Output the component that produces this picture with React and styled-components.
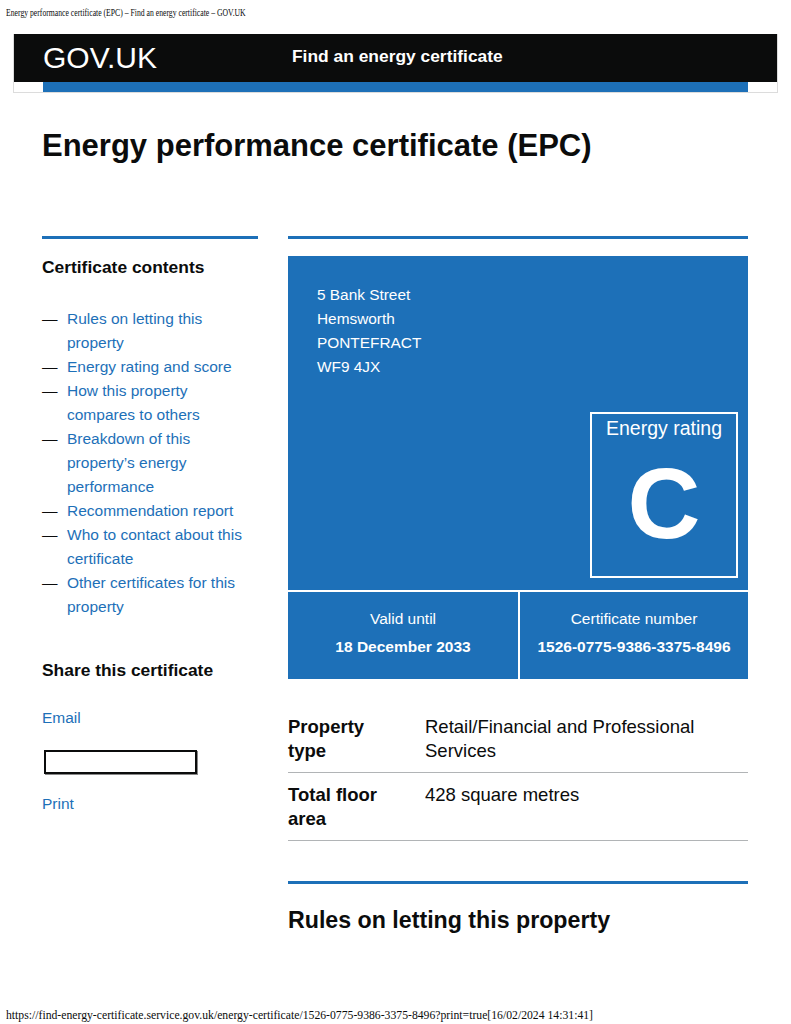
import styled, { createGlobalStyle } from 'styled-components';

const GlobalStyle = createGlobalStyle`
  body {
    margin: 0;
    background: #fff;
    color: #0b0c0c;
    font-family: "Liberation Sans", Arial, sans-serif;
  }
`;

const blue = '#1d70b8';

// browser print header / footer lines
const PrintLine = styled.div`
  height: ${(p) => p.$h}px;
  padding-top: ${(p) => p.$pt}px;
  margin-left: 6px;
  box-sizing: border-box;
  font-family: "Liberation Serif", "Times New Roman", serif;
  font-size: ${(p) => p.$fs}px;
  line-height: 12px;
  white-space: nowrap;
  transform: scaleX(${(p) => p.$sx});
  transform-origin: left top;
`;

const Header = styled.header`
  margin: 0 13px;
  border: 1px solid #dcdcdc;
  border-top: 0;
`;

const HeaderBar = styled.div`
  height: 48px;
  background: #0b0c0c;
  display: flex;
  align-items: center;
  padding-left: 29px;
  color: #fff;
`;

const Logo = styled.div`
  width: 249px;
  font-size: 30px;
  line-height: 1;
`;

const ServiceName = styled.div`
  font-size: 17.4px;
  font-weight: 700;
  margin-top: -4px;
`;

const HeaderStrip = styled.div`
  padding: 0 29px;
  div {
    height: 10px;
    background: ${blue};
  }
`;

const Main = styled.main`
  width: 706px;
  margin-left: 42px;
`;

const Title = styled.h1`
  margin: 35px 0 0;
  font-size: 31px;
  line-height: 36px;
  font-weight: 700;
`;

const Columns = styled.div`
  display: grid;
  grid-template-columns: 216px 460px;
  column-gap: 30px;
  margin-top: 72px;
`;

const Section = styled.div`
  border-top: 3px solid ${blue};
`;

const SideHeading = styled.h2`
  margin: ${(p) => p.$mt}px 0 0;
  font-size: 17.4px;
  line-height: 24px;
  font-weight: 700;
`;

const Contents = styled.ul`
  list-style: none;
  margin: 28px 0 0;
  padding: 0;
`;

const ContentItem = styled.li`
  display: flex;
  font-size: 15.5px;
  line-height: 24.2px;
  &::before {
    content: '—';
    width: 25px;
    flex: none;
    color: #0b0c0c;
  }
`;

const Link = styled.a`
  color: ${blue};
  text-decoration: none;
  font-size: 15.5px;
  line-height: 24px;
  display: ${(p) => (p.$block ? 'block' : 'inline')};
  margin-top: ${(p) => p.$mt || 0}px;
`;

const CopyBox = styled.div`
  margin: 20px 0 0 2px;
  width: 149px;
  height: 20px;
  border: 2px solid #0b0c0c;
  box-shadow: 1px 1px 0 #888;
`;

const CertBox = styled.div`
  margin-top: 17px;
  display: grid;
  grid-template-columns: 230px 228px;
  gap: 2px;
  background: #fff;
`;

const CertTop = styled.div`
  grid-column: 1 / span 2;
  height: 334px;
  box-sizing: border-box;
  background: ${blue};
  color: #fff;
  padding: 27px 10px 12px 29px;
  display: flex;
  flex-direction: column;
`;

const Address = styled.p`
  margin: 0;
  font-size: 15.4px;
  line-height: 24px;
`;

const RatingBox = styled.div`
  margin-top: auto;
  align-self: flex-end;
  width: 148px;
  height: 166px;
  box-sizing: border-box;
  border: 2px solid #fff;
  display: flex;
  flex-direction: column;
  align-items: center;
`;

const RatingLabel = styled.div`
  font-size: 19.5px;
  line-height: 24px;
  margin-top: 2px;
`;

const RatingLetter = styled.div`
  font-size: 101px;
  font-weight: 700;
  line-height: 1;
  margin-top: 13px;
`;

const CertCell = styled.div`
  height: 87px;
  background: ${blue};
  color: #fff;
  text-align: center;
  font-size: 15.5px;
  line-height: 28px;
  padding-top: 13px;
  box-sizing: border-box;
  strong {
    display: block;
    font-weight: 700;
  }
`;

const Summary = styled.dl`
  margin: 26px 0 0;
`;

const SummaryRow = styled.div`
  display: flex;
  border-bottom: 1px solid #b1b4b6;
  padding: 10px 0 9px;
  font-size: 18.5px;
  line-height: 24px;
  dt {
    width: 107px;
    padding-right: 30px;
    font-weight: 700;
  }
  dd {
    margin: 0;
    flex: 1;
  }
`;

const RuleHeading = styled.h2`
  margin: 40px 0 0;
  border-top: 3px solid ${blue};
  padding-top: 21px;
  font-size: 23.2px;
  line-height: 30px;
  font-weight: 700;
`;

const Footer = styled.div`
  margin-top: 74px;
`;

const contents = [
  'Rules on letting this property',
  'Energy rating and score',
  'How this property compares to others',
  'Breakdown of this property’s energy performance',
  'Recommendation report',
  'Who to contact about this certificate',
  'Other certificates for this property',
];

export default function App() {
  return (
    <>
      <GlobalStyle />
      <PrintLine $h={34} $pt={6} $fs={11} $sx={0.7}>
        Energy performance certificate (EPC) – Find an energy certificate – GOV.UK
      </PrintLine>
      <Header>
        <HeaderBar>
          <Logo>GOV.UK</Logo>
          <ServiceName>Find an energy certificate</ServiceName>
        </HeaderBar>
        <HeaderStrip>
          <div />
        </HeaderStrip>
      </Header>
      <Main>
        <Title>Energy performance certificate (EPC)</Title>
        <Columns>
          <Section as="nav">
            <SideHeading $mt={16}>Certificate contents</SideHeading>
            <Contents>
              {contents.map((c) => (
                <ContentItem key={c}>
                  <Link href="#">{c}</Link>
                </ContentItem>
              ))}
            </Contents>
            <SideHeading $mt={39}>Share this certificate</SideHeading>
            <Link $block $mt={24} href="#">Email</Link>
            <CopyBox />
            <Link $block $mt={18} href="#">Print</Link>
          </Section>
          <Section>
            <CertBox>
              <CertTop>
                <Address>
                  5 Bank Street
                  <br />
                  Hemsworth
                  <br />
                  PONTEFRACT
                  <br />
                  WF9 4JX
                </Address>
                <RatingBox>
                  <RatingLabel>Energy rating</RatingLabel>
                  <RatingLetter>C</RatingLetter>
                </RatingBox>
              </CertTop>
              <CertCell>
                Valid until
                <strong>18 December 2033</strong>
              </CertCell>
              <CertCell>
                Certificate number
                <strong>1526-0775-9386-3375-8496</strong>
              </CertCell>
            </CertBox>
            <Summary>
              <SummaryRow>
                <dt>Property type</dt>
                <dd>Retail/Financial and Professional Services</dd>
              </SummaryRow>
              <SummaryRow>
                <dt>Total floor area</dt>
                <dd>428 square metres</dd>
              </SummaryRow>
            </Summary>
            <RuleHeading>Rules on letting this property</RuleHeading>
          </Section>
        </Columns>
      </Main>
      <Footer>
        <PrintLine $h={20} $pt={0} $fs={13} $sx={0.9}>
          https://find-energy-certificate.service.gov.uk/energy-certificate/1526-0775-9386-3375-8496?print=true[16/02/2024 14:31:41]
        </PrintLine>
      </Footer>
    </>
  );
}
